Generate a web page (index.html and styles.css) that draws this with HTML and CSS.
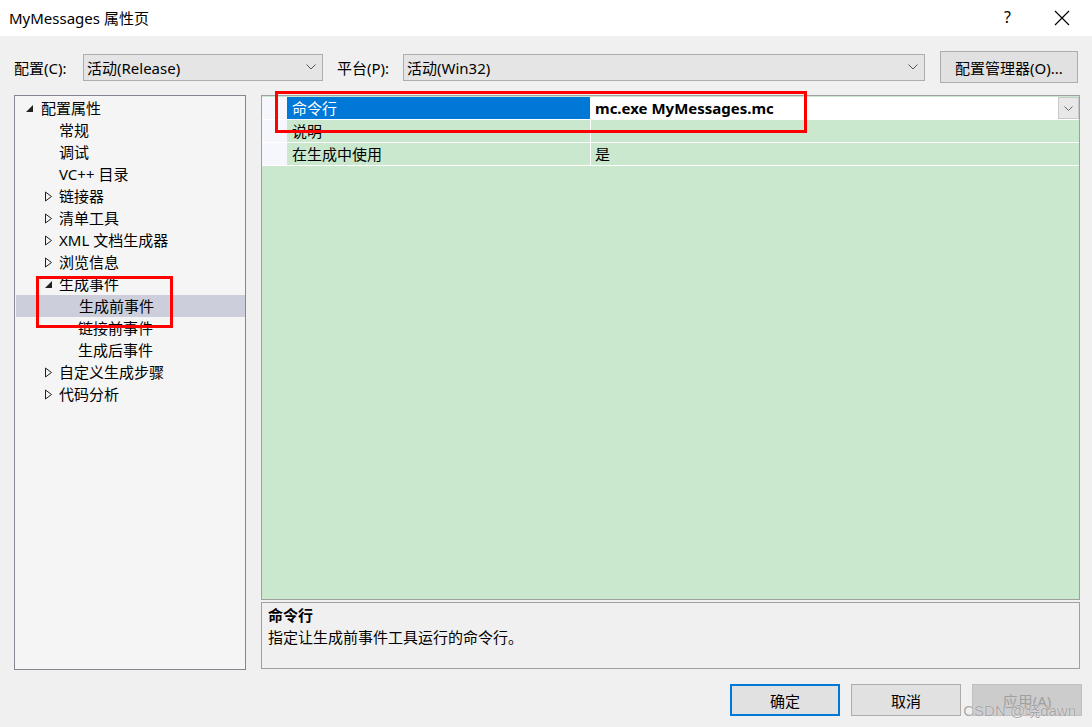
FILE: index.html
```html
<!DOCTYPE html>
<html lang="zh-CN">
<head>
  <meta charset="UTF-8">
  <title>MyMessages 属性页</title>
  <link rel="stylesheet" href="styles.css">
</head>
<body>
  <div class="dialog">
    <!-- Title bar -->
    <div class="titlebar">
      <span class="title">MyMessages 属性页</span>
      <span class="help">?</span>
      <svg class="close" width="16" height="16" viewBox="0 0 16 16"><path d="M1 1L15 15M15 1L1 15" stroke="#000" stroke-width="1.2" fill="none"/></svg>
    </div>

    <!-- Configuration row -->
    <div class="config-row">
      <span class="label">配置(C):</span>
      <div class="combo combo-config">
        <span>活动(Release)</span>
        <svg class="chev" width="10" height="6" viewBox="0 0 10 6"><path d="M0.5 0.5L5 5L9.5 0.5" stroke="#555" fill="none"/></svg>
      </div>
      <span class="label label-platform">平台(P):</span>
      <div class="combo combo-platform">
        <span>活动(Win32)</span>
        <svg class="chev" width="10" height="6" viewBox="0 0 10 6"><path d="M0.5 0.5L5 5L9.5 0.5" stroke="#555" fill="none"/></svg>
      </div>
      <button class="btn btn-manager">配置管理器(O)...</button>
    </div>

    <div class="main">
      <!-- Tree -->
      <div class="tree">
        <div class="node lvl0"><svg class="tri" width="9" height="9" viewBox="0 0 9 9"><path d="M8 1V8H1Z" fill="#222"/></svg>配置属性</div>
        <div class="node lvl1 leaf">常规</div>
        <div class="node lvl1 leaf">调试</div>
        <div class="node lvl1 leaf">VC++ 目录</div>
        <div class="node lvl1"><svg class="tri" width="9" height="11" viewBox="0 0 9 11"><path d="M1.5 1V10L7.5 5.5Z" stroke="#222" fill="none"/></svg>链接器</div>
        <div class="node lvl1"><svg class="tri" width="9" height="11" viewBox="0 0 9 11"><path d="M1.5 1V10L7.5 5.5Z" stroke="#222" fill="none"/></svg>清单工具</div>
        <div class="node lvl1"><svg class="tri" width="9" height="11" viewBox="0 0 9 11"><path d="M1.5 1V10L7.5 5.5Z" stroke="#222" fill="none"/></svg>XML 文档生成器</div>
        <div class="node lvl1"><svg class="tri" width="9" height="11" viewBox="0 0 9 11"><path d="M1.5 1V10L7.5 5.5Z" stroke="#222" fill="none"/></svg>浏览信息</div>
        <div class="node lvl1"><svg class="tri" width="9" height="9" viewBox="0 0 9 9"><path d="M8 1V8H1Z" fill="#222"/></svg>生成事件</div>
        <div class="node lvl2 leaf selected">生成前事件</div>
        <div class="node lvl2 leaf">链接前事件</div>
        <div class="node lvl2 leaf">生成后事件</div>
        <div class="node lvl1"><svg class="tri" width="9" height="11" viewBox="0 0 9 11"><path d="M1.5 1V10L7.5 5.5Z" stroke="#222" fill="none"/></svg>自定义生成步骤</div>
        <div class="node lvl1"><svg class="tri" width="9" height="11" viewBox="0 0 9 11"><path d="M1.5 1V10L7.5 5.5Z" stroke="#222" fill="none"/></svg>代码分析</div>
      </div>

      <div class="right">
        <!-- Property grid -->
        <div class="grid">
          <div class="row">
            <div class="gutter"></div>
            <div class="name active">命令行</div>
            <div class="value edit">
              <span>mc.exe MyMessages.mc</span>
              <span class="drop"><svg width="9" height="5" viewBox="0 0 9 5"><path d="M0.5 0.5L4.5 4.5L8.5 0.5" stroke="#666" fill="none"/></svg></span>
            </div>
          </div>
          <div class="row">
            <div class="gutter"></div>
            <div class="name">说明</div>
            <div class="value"></div>
          </div>
          <div class="row">
            <div class="gutter"></div>
            <div class="name">在生成中使用</div>
            <div class="value">是</div>
          </div>
        </div>

        <!-- Description -->
        <div class="desc">
          <div class="desc-title">命令行</div>
          <div class="desc-text">指定让生成前事件工具运行的命令行。</div>
        </div>
      </div>
    </div>

    <!-- Buttons -->
    <div class="footer">
      <button class="btn btn-ok">确定</button>
      <button class="btn">取消</button>
      <button class="btn disabled">应用(A)</button>
    </div>

    <!-- Annotations -->
    <div class="mark mark-cmd"></div>
    <div class="mark mark-tree"></div>
    <div class="watermark">CSDN @晓dawn</div>
  </div>
</body>
</html>
```

FILE: styles.css
```css
/* Windows property page dialog */
body {
  margin: 0;
  background-color: #f0f0f0;
  font-family: "Noto Sans", "Noto Sans CJK SC", sans-serif;
  font-size: 15px;
  color: #000;
}

.dialog {
  position: relative;
  width: 1092px;
  height: 727px;
  overflow: hidden;
}

/* Title bar */
.titlebar {
  height: 36px;
  background-color: #ffffff;
  display: flex;
  align-items: center;
  padding-left: 9px;
}

.title {
  font-size: 15px;
  flex: 1;
  margin-top: -2px;
}

.help {
  font-size: 16px;
  margin-right: 43px;
  margin-top: -2px;
}

.close {
  margin-right: 22px;
}

/* Config row */
.config-row {
  display: flex;
  align-items: center;
  height: 32px;
  margin-top: 15px;
  padding-left: 14px;
}

.label {
  width: 69px;
}

.label-platform {
  margin-left: 14px;
  width: 66px;
}

.combo {
  height: 25px;
  background-color: #e5e5e5;
  border: 1px solid #adadad;
  display: flex;
  align-items: center;
  padding-left: 3px;
  box-sizing: content-box;
}

.combo span {
  flex: 1;
}

.combo .chev {
  margin-right: 6px;
}

.combo-config {
  width: 235px;
}

.combo-platform {
  width: 517px;
}

.btn {
  font-family: inherit;
  font-size: 15px;
  background-color: #e1e1e1;
  border: 1px solid #adadad;
  color: #000;
  padding: 0;
  margin: 0;
}

.btn-manager {
  margin-left: 15px;
  width: 138px;
  height: 32px;
}

/* Main area */
.main {
  display: flex;
  margin-top: 12px;
  padding-left: 14px;
  height: 574px;
}

.tree {
  width: 230px;
  height: 572px;
  background-color: #f5f5f5;
  border: 1px solid #828790;
  padding-top: 1px;
  box-sizing: content-box;
}

.node {
  height: 22px;
  line-height: 22px;
  display: flex;
  align-items: center;
  white-space: nowrap;
}

.node .tri {
  flex: none;
  margin-right: 9px;
}

.lvl0 {
  padding-left: 10px;
}

.lvl0 .tri {
  margin-right: 7px;
}

.lvl1 {
  padding-left: 29px;
}

.lvl1.leaf {
  padding-left: 44px;
}

.lvl1 .tri {
  margin-right: 6px;
}

.lvl2.leaf {
  padding-left: 63px;
}

.selected {
  background-color: #cccedb;
  margin: 0 0 0 1px;
  padding-left: 62px;
}

.right {
  margin-left: 15px;
  width: 819px;
  display: flex;
  flex-direction: column;
}

/* Property grid */
.grid {
  height: 502px;
  background-color: #cae8cd;
  border: 1px solid #a0a0a0;
  padding-top: 1px;
  box-sizing: content-box;
}

.row {
  display: flex;
  height: 22px;
  border-bottom: 1px solid #ffffff;
}

.gutter {
  width: 25px;
  background-color: #f5f7fc;
}

.name {
  width: 298px;
  padding-left: 5px;
  line-height: 22px;
  border-right: 1px solid #ffffff;
}

.name.active {
  background-color: #0078d7;
  color: #ffffff;
}

.value {
  flex: 1;
  padding-left: 4px;
  line-height: 22px;
}

.value.edit {
  background-color: #ffffff;
  font-weight: bold;
  display: flex;
  padding-right: 0;
}

.value.edit span:first-child {
  flex: 1;
}

.drop {
  width: 19px;
  height: 20px;
  background-color: #e8e8e8;
  border: 1px solid #c8c8c8;
  display: flex;
  align-items: center;
  justify-content: center;
}

/* Description pane */
.desc {
  margin-top: 2px;
  height: 65px;
  border: 1px solid #a0a0a0;
  padding-left: 6px;
  background-color: #f0f0f0;
}

.desc-title {
  font-weight: bold;
  line-height: 22px;
  margin-top: 1px;
}

.desc-text {
  line-height: 22px;
}

/* Footer buttons */
.footer {
  display: flex;
  justify-content: flex-end;
  gap: 11px;
  padding-right: 10px;
  margin-top: 15px;
}

.footer .btn {
  width: 110px;
  height: 32px;
}

.btn-ok {
  border: 2px solid #0078d7;
}

.btn.disabled {
  background-color: #cccccc;
  border-color: #bfbfbf;
  color: #a0a0a0;
}

/* Red annotation boxes */
.mark {
  position: absolute;
  border: 3px solid #ff0000;
  box-sizing: border-box;
}

.mark-cmd {
  left: 275px;
  top: 91px;
  width: 532px;
  height: 42px;
}

.mark-tree {
  left: 36px;
  top: 276px;
  width: 137px;
  height: 52px;
}

.watermark {
  position: absolute;
  right: 16px;
  bottom: 7px;
  font-family: "Liberation Sans", "Noto Sans CJK SC", sans-serif;
  font-size: 15px;
  color: rgba(150, 150, 150, 0.85);
  text-shadow: 0 0 1px #ffffff;
}
```
